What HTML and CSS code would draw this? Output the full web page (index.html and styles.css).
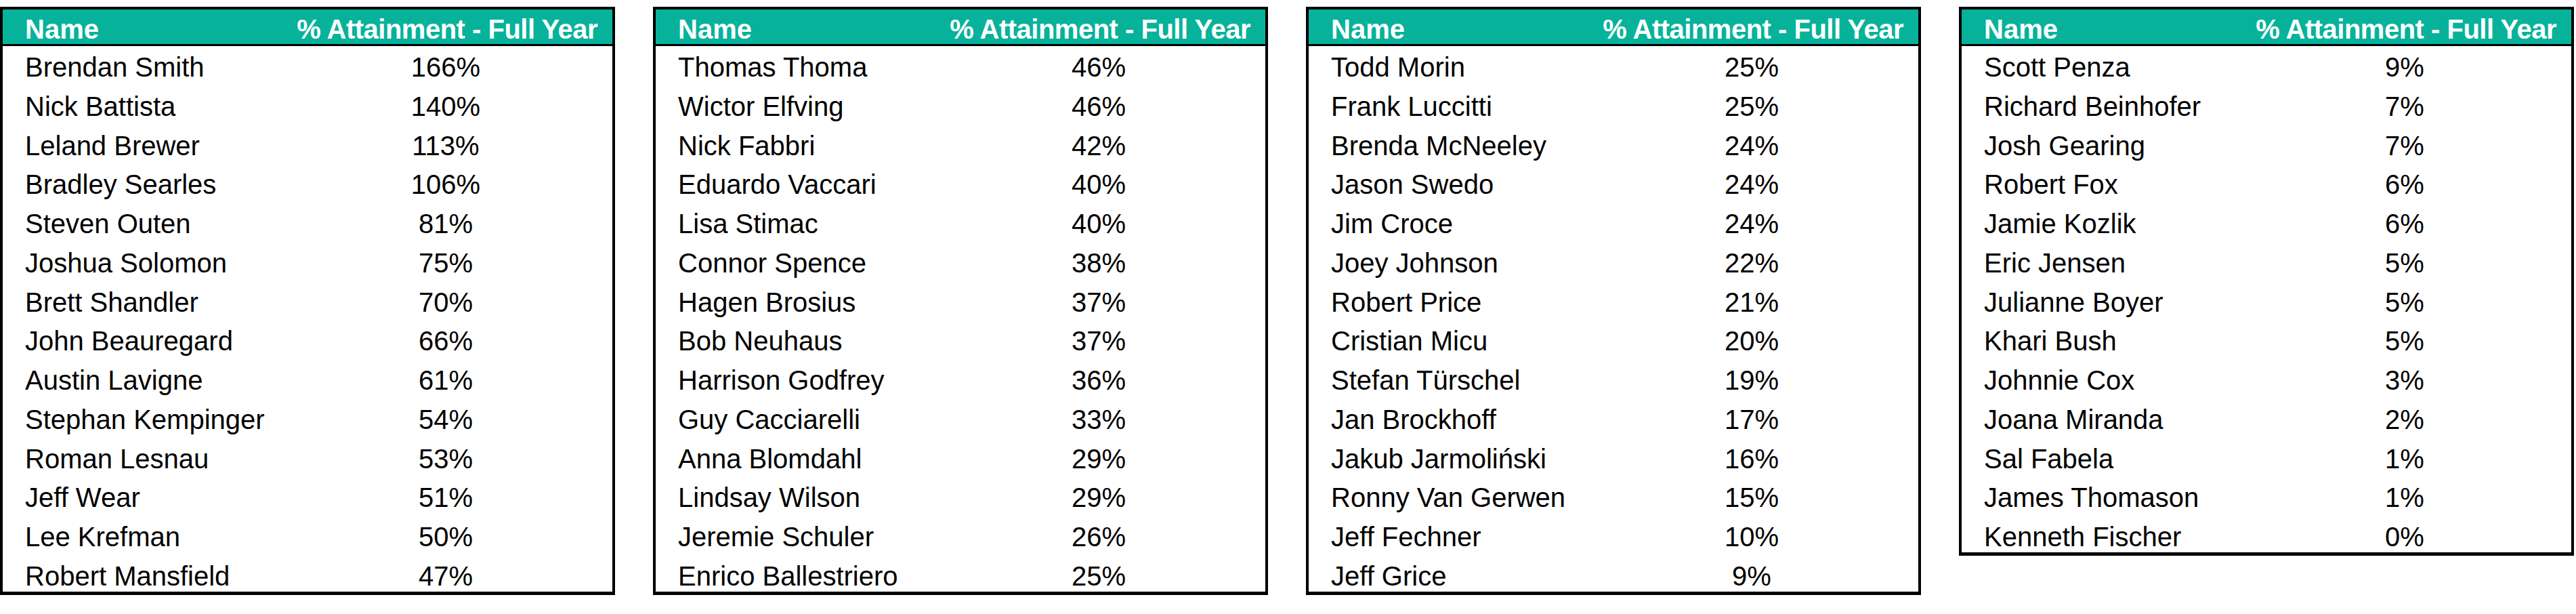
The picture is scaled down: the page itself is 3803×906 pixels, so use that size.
FILE: index.html
```html
<!DOCTYPE html>
<html>
<head>
<meta charset="utf-8">
<link rel="stylesheet" href="styles.css">
</head>
<body>
<div class="boards">
  <div class="board">
    <div class="head"><span>Name</span><span class="metric">% Attainment - Full Year</span></div>
    <div class="rows">
      <div class="row"><span>Brendan Smith</span><span class="val">166%</span></div>
      <div class="row"><span>Nick Battista</span><span class="val">140%</span></div>
      <div class="row"><span>Leland Brewer</span><span class="val">113%</span></div>
      <div class="row"><span>Bradley Searles</span><span class="val">106%</span></div>
      <div class="row"><span>Steven Outen</span><span class="val">81%</span></div>
      <div class="row"><span>Joshua Solomon</span><span class="val">75%</span></div>
      <div class="row"><span>Brett Shandler</span><span class="val">70%</span></div>
      <div class="row"><span>John Beauregard</span><span class="val">66%</span></div>
      <div class="row"><span>Austin Lavigne</span><span class="val">61%</span></div>
      <div class="row"><span>Stephan Kempinger</span><span class="val">54%</span></div>
      <div class="row"><span>Roman Lesnau</span><span class="val">53%</span></div>
      <div class="row"><span>Jeff Wear</span><span class="val">51%</span></div>
      <div class="row"><span>Lee Krefman</span><span class="val">50%</span></div>
      <div class="row"><span>Robert Mansfield</span><span class="val">47%</span></div>
    </div>
  </div>
  <div class="board">
    <div class="head"><span>Name</span><span class="metric">% Attainment - Full Year</span></div>
    <div class="rows">
      <div class="row"><span>Thomas Thoma</span><span class="val">46%</span></div>
      <div class="row"><span>Wictor Elfving</span><span class="val">46%</span></div>
      <div class="row"><span>Nick Fabbri</span><span class="val">42%</span></div>
      <div class="row"><span>Eduardo Vaccari</span><span class="val">40%</span></div>
      <div class="row"><span>Lisa Stimac</span><span class="val">40%</span></div>
      <div class="row"><span>Connor Spence</span><span class="val">38%</span></div>
      <div class="row"><span>Hagen Brosius</span><span class="val">37%</span></div>
      <div class="row"><span>Bob Neuhaus</span><span class="val">37%</span></div>
      <div class="row"><span>Harrison Godfrey</span><span class="val">36%</span></div>
      <div class="row"><span>Guy Cacciarelli</span><span class="val">33%</span></div>
      <div class="row"><span>Anna Blomdahl</span><span class="val">29%</span></div>
      <div class="row"><span>Lindsay Wilson</span><span class="val">29%</span></div>
      <div class="row"><span>Jeremie Schuler</span><span class="val">26%</span></div>
      <div class="row"><span>Enrico Ballestriero</span><span class="val">25%</span></div>
    </div>
  </div>
  <div class="board">
    <div class="head"><span>Name</span><span class="metric">% Attainment - Full Year</span></div>
    <div class="rows">
      <div class="row"><span>Todd Morin</span><span class="val">25%</span></div>
      <div class="row"><span>Frank Luccitti</span><span class="val">25%</span></div>
      <div class="row"><span>Brenda McNeeley</span><span class="val">24%</span></div>
      <div class="row"><span>Jason Swedo</span><span class="val">24%</span></div>
      <div class="row"><span>Jim Croce</span><span class="val">24%</span></div>
      <div class="row"><span>Joey Johnson</span><span class="val">22%</span></div>
      <div class="row"><span>Robert Price</span><span class="val">21%</span></div>
      <div class="row"><span>Cristian Micu</span><span class="val">20%</span></div>
      <div class="row"><span>Stefan Türschel</span><span class="val">19%</span></div>
      <div class="row"><span>Jan Brockhoff</span><span class="val">17%</span></div>
      <div class="row"><span>Jakub Jarmoliński</span><span class="val">16%</span></div>
      <div class="row"><span>Ronny Van Gerwen</span><span class="val">15%</span></div>
      <div class="row"><span>Jeff Fechner</span><span class="val">10%</span></div>
      <div class="row"><span>Jeff Grice</span><span class="val">9%</span></div>
    </div>
  </div>
  <div class="board">
    <div class="head"><span>Name</span><span class="metric">% Attainment - Full Year</span></div>
    <div class="rows">
      <div class="row"><span>Scott Penza</span><span class="val">9%</span></div>
      <div class="row"><span>Richard Beinhofer</span><span class="val">7%</span></div>
      <div class="row"><span>Josh Gearing</span><span class="val">7%</span></div>
      <div class="row"><span>Robert Fox</span><span class="val">6%</span></div>
      <div class="row"><span>Jamie Kozlik</span><span class="val">6%</span></div>
      <div class="row"><span>Eric Jensen</span><span class="val">5%</span></div>
      <div class="row"><span>Julianne Boyer</span><span class="val">5%</span></div>
      <div class="row"><span>Khari Bush</span><span class="val">5%</span></div>
      <div class="row"><span>Johnnie Cox</span><span class="val">3%</span></div>
      <div class="row"><span>Joana Miranda</span><span class="val">2%</span></div>
      <div class="row"><span>Sal Fabela</span><span class="val">1%</span></div>
      <div class="row"><span>James Thomason</span><span class="val">1%</span></div>
      <div class="row"><span>Kenneth Fischer</span><span class="val">0%</span></div>
    </div>
  </div>
</div>
</body>
</html>
```

FILE: styles.css
```css
html, body {
  margin: 0;
  padding: 0;
  background: #ffffff;
}

body {
  padding-top: 10px;
  font-family: "Liberation Sans", Arial, sans-serif;
  color: #000000;
}

.boards {
  display: flex;
  align-items: flex-start;
  gap: 56px;
}

.board {
  width: 908px;
  box-sizing: border-box;
  border: 4px solid #000000;
  border-bottom-width: 5px;
  display: flex;
  flex-direction: column;
}

.head {
  height: 54px;
  box-sizing: border-box;
  padding: 4px 22px 0 33px;
  background: #07b29b;
  color: #ffffff;
  font-weight: bold;
  font-size: 40px;
  line-height: 50px;
  display: flex;
  justify-content: space-between;
  border-bottom: 3px solid #000000;
}

.head .metric {
  letter-spacing: -0.5px;
}

.rows {
  display: flex;
  flex-direction: column;
  margin-bottom: -4px;
}

.row {
  display: grid;
  grid-template-columns: 375px 492px;
  padding: 6px 0 1.75px 33px;
  font-size: 40px;
  line-height: 50px;
  white-space: nowrap;
}

.row .val {
  text-align: center;
}
```
